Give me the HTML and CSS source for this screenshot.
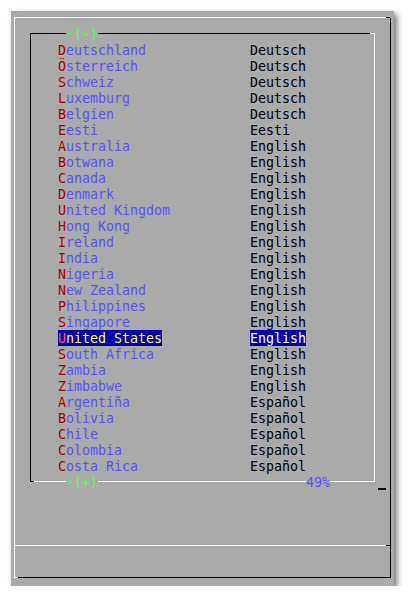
FILE: index.html
```html
<!DOCTYPE html>
<html>
<head>
<meta charset="utf-8">
<link rel="stylesheet" href="styles.css">
</head>
<body>
<div class="screen">
  <div class="dialog">
    <div class="body">
      <div class="list">
        <span class="tag tag-top"><svg class="arrow" width="8" height="16" viewBox="0 0 8 16"><path d="M4 5.5V10.5M1.8 7.8L4 5.5L6.2 7.8" fill="none" stroke="#55ff55" stroke-width="1"/></svg>(-)</span>
        <div class="row"><span class="name"><b>D</b>eutschland</span><span class="lang">Deutsch</span></div>
        <div class="row"><span class="name"><b>Ö</b>sterreich</span><span class="lang">Deutsch</span></div>
        <div class="row"><span class="name"><b>S</b>chweiz</span><span class="lang">Deutsch</span></div>
        <div class="row"><span class="name"><b>L</b>uxemburg</span><span class="lang">Deutsch</span></div>
        <div class="row"><span class="name"><b>B</b>elgien</span><span class="lang">Deutsch</span></div>
        <div class="row"><span class="name"><b>E</b>esti</span><span class="lang">Eesti</span></div>
        <div class="row"><span class="name"><b>A</b>ustralia</span><span class="lang">English</span></div>
        <div class="row"><span class="name"><b>B</b>otwana</span><span class="lang">English</span></div>
        <div class="row"><span class="name"><b>C</b>anada</span><span class="lang">English</span></div>
        <div class="row"><span class="name"><b>D</b>enmark</span><span class="lang">English</span></div>
        <div class="row"><span class="name"><b>U</b>nited Kingdom</span><span class="lang">English</span></div>
        <div class="row"><span class="name"><b>H</b>ong Kong</span><span class="lang">English</span></div>
        <div class="row"><span class="name"><b>I</b>reland</span><span class="lang">English</span></div>
        <div class="row"><span class="name"><b>I</b>ndia</span><span class="lang">English</span></div>
        <div class="row"><span class="name"><b>N</b>igeria</span><span class="lang">English</span></div>
        <div class="row"><span class="name"><b>N</b>ew Zealand</span><span class="lang">English</span></div>
        <div class="row"><span class="name"><b>P</b>hilippines</span><span class="lang">English</span></div>
        <div class="row"><span class="name"><b>S</b>ingapore</span><span class="lang">English</span></div>
        <div class="row selected"><span class="name"><b>U</b>nited States</span><span class="lang">English</span></div>
        <div class="row"><span class="name"><b>S</b>outh Africa</span><span class="lang">English</span></div>
        <div class="row"><span class="name"><b>Z</b>ambia</span><span class="lang">English</span></div>
        <div class="row"><span class="name"><b>Z</b>imbabwe</span><span class="lang">English</span></div>
        <div class="row"><span class="name"><b>A</b>rgentiña</span><span class="lang">Español</span></div>
        <div class="row"><span class="name"><b>B</b>olivia</span><span class="lang">Español</span></div>
        <div class="row"><span class="name"><b>C</b>hile</span><span class="lang">Español</span></div>
        <div class="row"><span class="name"><b>C</b>olombia</span><span class="lang">Español</span></div>
        <div class="row"><span class="name"><b>C</b>osta Rica</span><span class="lang">Español</span></div>
        <span class="tag tag-bottom"><svg class="arrow" width="8" height="16" viewBox="0 0 8 16"><path d="M4 4.5V10M1.8 7.7L4 10L6.2 7.7" fill="none" stroke="#55ff55" stroke-width="1"/></svg>(+)</span>
        <span class="tag tag-pct">49%</span>
        <span class="mark"></span>
      </div>
    </div>
    <div class="sep"></div>
    <div class="footer"></div>
  </div>
</div>
</body>
</html>
```
FILE: styles.css
```css
html, body {
  margin: 0;
  padding: 0;
  background: #ffffff;
}

.screen {
  box-sizing: border-box;
  margin: 11px 0 0 11px;
  width: 383px;
  height: 575px;
  padding: 6px 0 0 3px;
  background: #aaaaaa;
  box-shadow: 3px 3px 6px rgba(0, 0, 0, 0.55);
  font-family: "DejaVu Sans Mono", monospace;
  font-size: 13.3px;
  line-height: 16px;
}

.dialog {
  position: relative;
  box-sizing: border-box;
  width: 377px;
  height: 561px;
  border-top: 1px solid #ffffff;
  border-left: 1px solid #ffffff;
  border-right: 1px solid #000000;
  border-bottom: 1px solid #000000;
  display: flex;
  flex-direction: column;
}

.dialog::before {
  content: "";
  position: absolute;
  top: -1px;
  right: 0;
  width: 4px;
  height: 1px;
  background: #000000;
}

.dialog::after {
  content: "";
  position: absolute;
  bottom: -1px;
  left: -1px;
  width: 4px;
  height: 1px;
  background: #ffffff;
}

.body {
  padding: 15px 0 63px 15px;
}

.list {
  position: relative;
  box-sizing: border-box;
  width: 345px;
  padding: 8px 0 7px 27px;
  border-top: 1px solid #000000;
  border-left: 1px solid #000000;
  border-right: 1px solid #ffffff;
  border-bottom: 1px solid #ffffff;
}

.list::before {
  content: "";
  position: absolute;
  top: -1px;
  right: -1px;
  width: 5px;
  height: 1px;
  background: #ffffff;
}

.list::after {
  content: "";
  position: absolute;
  bottom: -1px;
  left: -1px;
  width: 4px;
  height: 1px;
  background: #000000;
}

.row {
  display: grid;
  grid-template-columns: 192px auto;
  height: 16px;
  white-space: pre;
}

.name,
.lang {
  height: 16px;
  line-height: 18px;
  justify-self: start;
}

.name {
  color: #5555ff;
}

.name b {
  font-weight: normal;
  color: #aa0000;
}

.lang {
  color: #000000;
}

.selected .name {
  background: #0000aa;
  color: #ffff55;
}

.selected .name b {
  color: #ff5555;
}

.selected .lang {
  background: #0000aa;
  color: #ffffff;
}

.tag {
  position: absolute;
  height: 16px;
  line-height: 18px;
  background: #aaaaaa;
  white-space: pre;
}

.tag-top {
  left: 35px;
  top: -8px;
  color: #55ff55;
  display: flex;
}

.tag-bottom {
  left: 35px;
  top: 440px;
  color: #55ff55;
  display: flex;
}

.tag-pct {
  left: 275px;
  top: 440px;
  color: #5555ff;
}

.arrow {
  display: block;
  width: 8px;
  height: 16px;
}

.mark {
  position: absolute;
  left: 347px;
  top: 454px;
  width: 8px;
  height: 2px;
  background: #000000;
}

.sep {
  position: relative;
  height: 1px;
  background: #ffffff;
}

.sep::after {
  content: "";
  position: absolute;
  top: 0;
  right: 0;
  width: 4px;
  height: 1px;
  background: #000000;
}

.footer {
  flex: 1;
}
```
